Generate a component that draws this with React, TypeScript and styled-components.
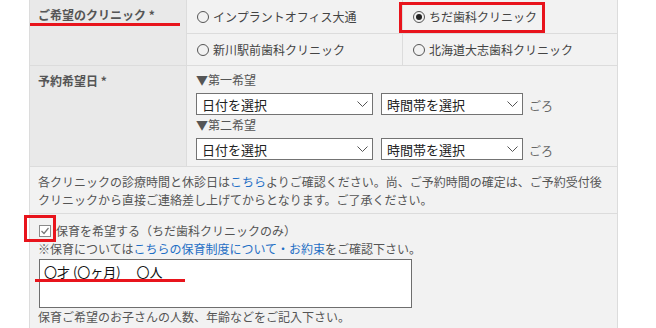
import styled, { createGlobalStyle } from "styled-components";

const GlobalStyle = createGlobalStyle`
  body {
    margin: 0;
    background: #fff;
    font-family: "Noto Sans CJK JP", "Noto Sans", sans-serif;
    color: #555;
    font-size: 12px;
  }
`;

const Panel = styled.div`
  width: 589px;
  box-sizing: border-box;
  margin-left: 29px;
  border-left: 1px solid #dcdcdc;
  border-right: 1px solid #dcdcdc;
  background: #f2f2f2;
`;

const Row = styled.div`
  display: grid;
  grid-template-columns: 157px 1fr;
  border-bottom: 1px solid #dcdcdc;
`;

const LabelCell = styled.div`
  position: relative;
  box-sizing: border-box;
  background: #e9e9e9;
  border-right: 1px solid #dcdcdc;
  padding: 6px 8px;
  line-height: 18px;
  font-weight: bold;
  color: #555;
`;

const Underline = styled.span<{ $w: number; $top: number; $left: number }>`
  position: absolute;
  left: ${(p) => p.$left}px;
  top: ${(p) => p.$top}px;
  width: ${(p) => p.$w}px;
  height: 3px;
  background: #e8141c;
`;

const ClinicGrid = styled.div`
  display: grid;
  grid-template-columns: 216px 1fr;
  grid-template-rows: 34px 31px;
`;

const ClinicCell = styled.div<{ $right?: boolean; $top?: boolean }>`
  position: relative;
  display: flex;
  align-items: center;
  gap: 4px;
  padding-left: 10px;
  box-sizing: border-box;
  border-right: ${(p) => (p.$right ? "1px solid #dcdcdc" : "none")};
  border-bottom: ${(p) => (p.$top ? "1px solid #dcdcdc" : "none")};
  color: #444;
  line-height: 18px;
`;

const Radio = styled.span<{ $on?: boolean }>`
  width: 12px;
  height: 12px;
  box-sizing: border-box;
  border: 1px solid #555;
  border-radius: 50%;
  display: inline-flex;
  align-items: center;
  justify-content: center;
  &::after {
    content: "";
    display: ${(p) => (p.$on ? "block" : "none")};
    width: 6px;
    height: 6px;
    border-radius: 50%;
    background: #222;
  }
`;

const Frame = styled.span`
  position: absolute;
  left: -4px;
  top: 2px;
  width: 146px;
  height: 31px;
  box-sizing: border-box;
  border: 3px solid #e8141c;
`;

const DateCell = styled.div`
  padding: 5px 10px 5px 9px;
`;

const Line = styled.div`
  height: 18px;
  line-height: 18px;
  white-space: nowrap;
`;

const SelectLine = styled.div`
  display: flex;
  align-items: flex-end;
  gap: 8px;
  height: 22px;
  margin: 4px 0 1px;
`;

const Select = styled.div<{ $w: number }>`
  width: ${(p) => p.$w}px;
  height: 22px;
  box-sizing: border-box;
  border: 1px solid #737373;
  background: #fff;
  display: flex;
  align-items: center;
  justify-content: space-between;
  padding: 0 4px 0 5px;
  font-size: 13px;
  color: #222;
`;

const Suffix = styled.span`
  margin-left: -2px;
  height: 18px;
  line-height: 18px;
  color: #666;
`;

const Note = styled.div`
  padding: 6px 8px 4px;
  border-bottom: 1px solid #dcdcdc;
  color: #555;
`;

const Link = styled.a`
  color: #1f6fc5;
  text-decoration: none;
`;

const Childcare = styled.div`
  padding: 8px 8px 10px;
`;

const CheckLine = styled.label`
  display: flex;
  align-items: center;
  gap: 5px;
  height: 18px;
  line-height: 18px;
  color: #555;
`;

const CheckBox = styled.span`
  position: relative;
  width: 12px;
  height: 12px;
  margin-left: 1px;
  box-sizing: border-box;
  border: 1px solid #8a8a8a;
  background: #fff;
  display: inline-flex;
`;

const CheckFrame = styled.span`
  position: absolute;
  left: -16px;
  top: -11px;
  width: 32px;
  height: 27px;
  box-sizing: border-box;
  border: 3px solid #e8141c;
`;

const TextBox = styled.div`
  position: relative;
  width: 373px;
  height: 49px;
  margin: 1px 0 0 1px;
  box-sizing: border-box;
  border: 1px solid #6e6e6e;
  background: #fff;
  padding: 3px 4px;
  font-size: 13px;
  line-height: 18px;
  color: #111;
  white-space: pre;
`;

const Chevron = () => (
  <svg width="11" height="7" viewBox="0 0 11 7">
    <polyline points="0.5,0.5 5.5,5.5 10.5,0.5" fill="none" stroke="#555" strokeWidth="1" />
  </svg>
);

const Tick = () => (
  <svg width="10" height="10" viewBox="0 0 10 10">
    <polyline points="1.5,5 4,7.5 8.5,2" fill="none" stroke="#777" strokeWidth="1.2" />
  </svg>
);

const wishes = ["▼第一希望", "▼第二希望"];

export default function App() {
  return (
    <>
      <GlobalStyle />
      <Panel>
        <Row>
          <LabelCell>
            ご希望のクリニック *
            <Underline $left={0} $top={23} $w={150} />
          </LabelCell>
          <ClinicGrid>
            <ClinicCell $right $top>
              <Radio />
              インプラントオフィス大通
            </ClinicCell>
            <ClinicCell $top>
              <Radio $on />
              ちだ歯科クリニック
              <Frame />
            </ClinicCell>
            <ClinicCell $right>
              <Radio />
              新川駅前歯科クリニック
            </ClinicCell>
            <ClinicCell>
              <Radio />
              北海道大志歯科クリニック
            </ClinicCell>
          </ClinicGrid>
        </Row>
        <Row>
          <LabelCell>予約希望日 *</LabelCell>
          <DateCell>
            {wishes.map((w) => (
              <div key={w}>
                <Line>{w}</Line>
                <SelectLine>
                  <Select $w={177}>
                    日付を選択
                    <Chevron />
                  </Select>
                  <Select $w={142}>
                    時間帯を選択
                    <Chevron />
                  </Select>
                  <Suffix>ごろ</Suffix>
                </SelectLine>
              </div>
            ))}
          </DateCell>
        </Row>
        <Note>
          <Line>
            各クリニックの診療時間と休診日は<Link>こちら</Link>よりご確認ください。尚、ご予約時間の確定は、ご予約受付後
          </Line>
          <Line>クリニックから直接ご連絡差し上げてからとなります。ご了承ください。</Line>
        </Note>
        <Childcare>
          <CheckLine>
            <CheckBox>
              <Tick />
              <CheckFrame />
            </CheckBox>
            保育を希望する（ちだ歯科クリニックのみ）
          </CheckLine>
          <Line>
            ※保育については<Link>こちらの保育制度について・お約束</Link>をご確認下さい。
          </Line>
          <TextBox>
            {"〇才 (〇ヶ月)　 〇人"}
            <Underline $left={-5} $top={19} $w={150} />
          </TextBox>
          <Line>保育ご希望のお子さんの人数、年齢などをご記入下さい。</Line>
        </Childcare>
      </Panel>
    </>
  );
}
